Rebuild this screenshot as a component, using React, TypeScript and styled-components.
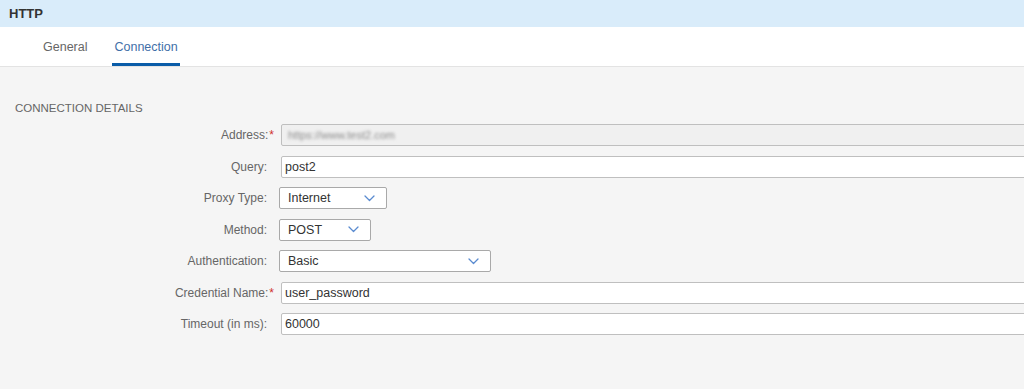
import React, { FunctionComponent } from "react";
import styled, { createGlobalStyle } from "styled-components";

const GlobalStyle = createGlobalStyle`
  html, body {
    margin: 0;
    padding: 0;
    background: #f5f5f5;
    font-family: "Liberation Sans", Arial, sans-serif;
    overflow: hidden;
  }
`;

const Page = styled.div`
  min-height: 100vh;
  background: #f5f5f5;
`;

const Header = styled.header`
  height: 27px;
  background: #d9ecfa;
  display: flex;
  align-items: center;
  padding-left: 9px;
  font-size: 13px;
  font-weight: bold;
  color: #333;
`;

const TabBar = styled.nav`
  height: 39px;
  background: #ffffff;
  border-bottom: 1px solid #e3e3e3;
  display: flex;
  align-items: stretch;
  padding-left: 41px;
  gap: 23px;
`;

const Tab = styled.div<{ $active?: boolean }>`
  display: flex;
  align-items: center;
  padding: 2px 2px 0;
  font-size: 12.5px;
  color: ${(p) => (p.$active ? "#3f6fa8" : "#666")};
  border-bottom: 3px solid ${(p) => (p.$active ? "#0a5ca8" : "transparent")};
  box-sizing: border-box;
  height: 38px;
  margin-top: 1px;
`;

const Content = styled.section`
  padding: 34px 0 0 15px;
`;

const SectionTitle = styled.h2`
  margin: 0 0 9px;
  font-size: 11.5px;
  font-weight: normal;
  color: #666;
  line-height: 14px;
`;

const Form = styled.div`
  display: grid;
  grid-template-columns: 252px 1fr;
  column-gap: 12px;
  row-gap: 9.5px;
  align-items: center;
  margin-right: -4px;
`;

const Label = styled.label`
  text-align: right;
  font-size: 12px;
  color: #666;
  white-space: nowrap;
`;

const Required = styled.span`
  color: #d0312d;
  margin-left: 1px;
  margin-right: -7px;
`;

const TextInput = styled.div<{ $disabled?: boolean }>`
  height: 22px;
  box-sizing: border-box;
  margin-left: 2px;
  border: 1px solid #bfbfbf;
  border-radius: 2px;
  background: ${(p) => (p.$disabled ? "#f0f0f0" : "#ffffff")};
  display: flex;
  align-items: center;
  padding-left: 3px;
  font-size: 12.5px;
  color: #333;
`;

const Blurred = styled.span`
  color: #8a8a8a;
  filter: blur(1.4px);
  padding-left: 3px;
  font-size: 11px;
`;

const Select = styled.div<{ $width: number }>`
  width: ${(p) => p.$width}px;
  height: 22px;
  box-sizing: border-box;
  border: 1px solid #a9a9a9;
  border-radius: 2px;
  background: #ffffff;
  display: flex;
  align-items: center;
  justify-content: space-between;
  padding: 0 11px 0 8px;
  font-size: 12.5px;
  color: #333;
`;

const Chevron = () => (
  <svg width="11" height="7" viewBox="0 0 11 7">
    <polyline
      points="1,1 5.5,5.5 10,1"
      fill="none"
      stroke="#5a8bd0"
      strokeWidth="1.3"
      strokeLinecap="round"
      strokeLinejoin="round"
    />
  </svg>
);

type Row =
  | { label: string; required?: boolean; kind: "text"; value: string; disabled?: boolean }
  | { label: string; required?: boolean; kind: "select"; value: string; width: number };

const rows: Row[] = [
  { label: "Address:", required: true, kind: "text", value: "https://www.test2.com", disabled: true },
  { label: "Query:", kind: "text", value: "post2" },
  { label: "Proxy Type:", kind: "select", value: "Internet", width: 108 },
  { label: "Method:", kind: "select", value: "POST", width: 92 },
  { label: "Authentication:", kind: "select", value: "Basic", width: 212 },
  { label: "Credential Name:", required: true, kind: "text", value: "user_password" },
  { label: "Timeout (in ms):", kind: "text", value: "60000" },
];

const App: FunctionComponent = () => {
  return (
    <Page>
      <GlobalStyle />
      <Header>HTTP</Header>
      <TabBar>
        <Tab>General</Tab>
        <Tab $active>Connection</Tab>
      </TabBar>
      <Content>
        <SectionTitle>CONNECTION DETAILS</SectionTitle>
        <Form>
          {rows.map((row) => (
            <React.Fragment key={row.label}>
              <Label>
                {row.label}
                {row.required && <Required>*</Required>}
              </Label>
              {row.kind === "text" ? (
                <TextInput $disabled={row.disabled}>
                  {row.disabled ? <Blurred>{row.value}</Blurred> : row.value}
                </TextInput>
              ) : (
                <div>
                  <Select $width={row.width}>
                    {row.value}
                    <Chevron />
                  </Select>
                </div>
              )}
            </React.Fragment>
          ))}
        </Form>
      </Content>
    </Page>
  );
};

export default App;
